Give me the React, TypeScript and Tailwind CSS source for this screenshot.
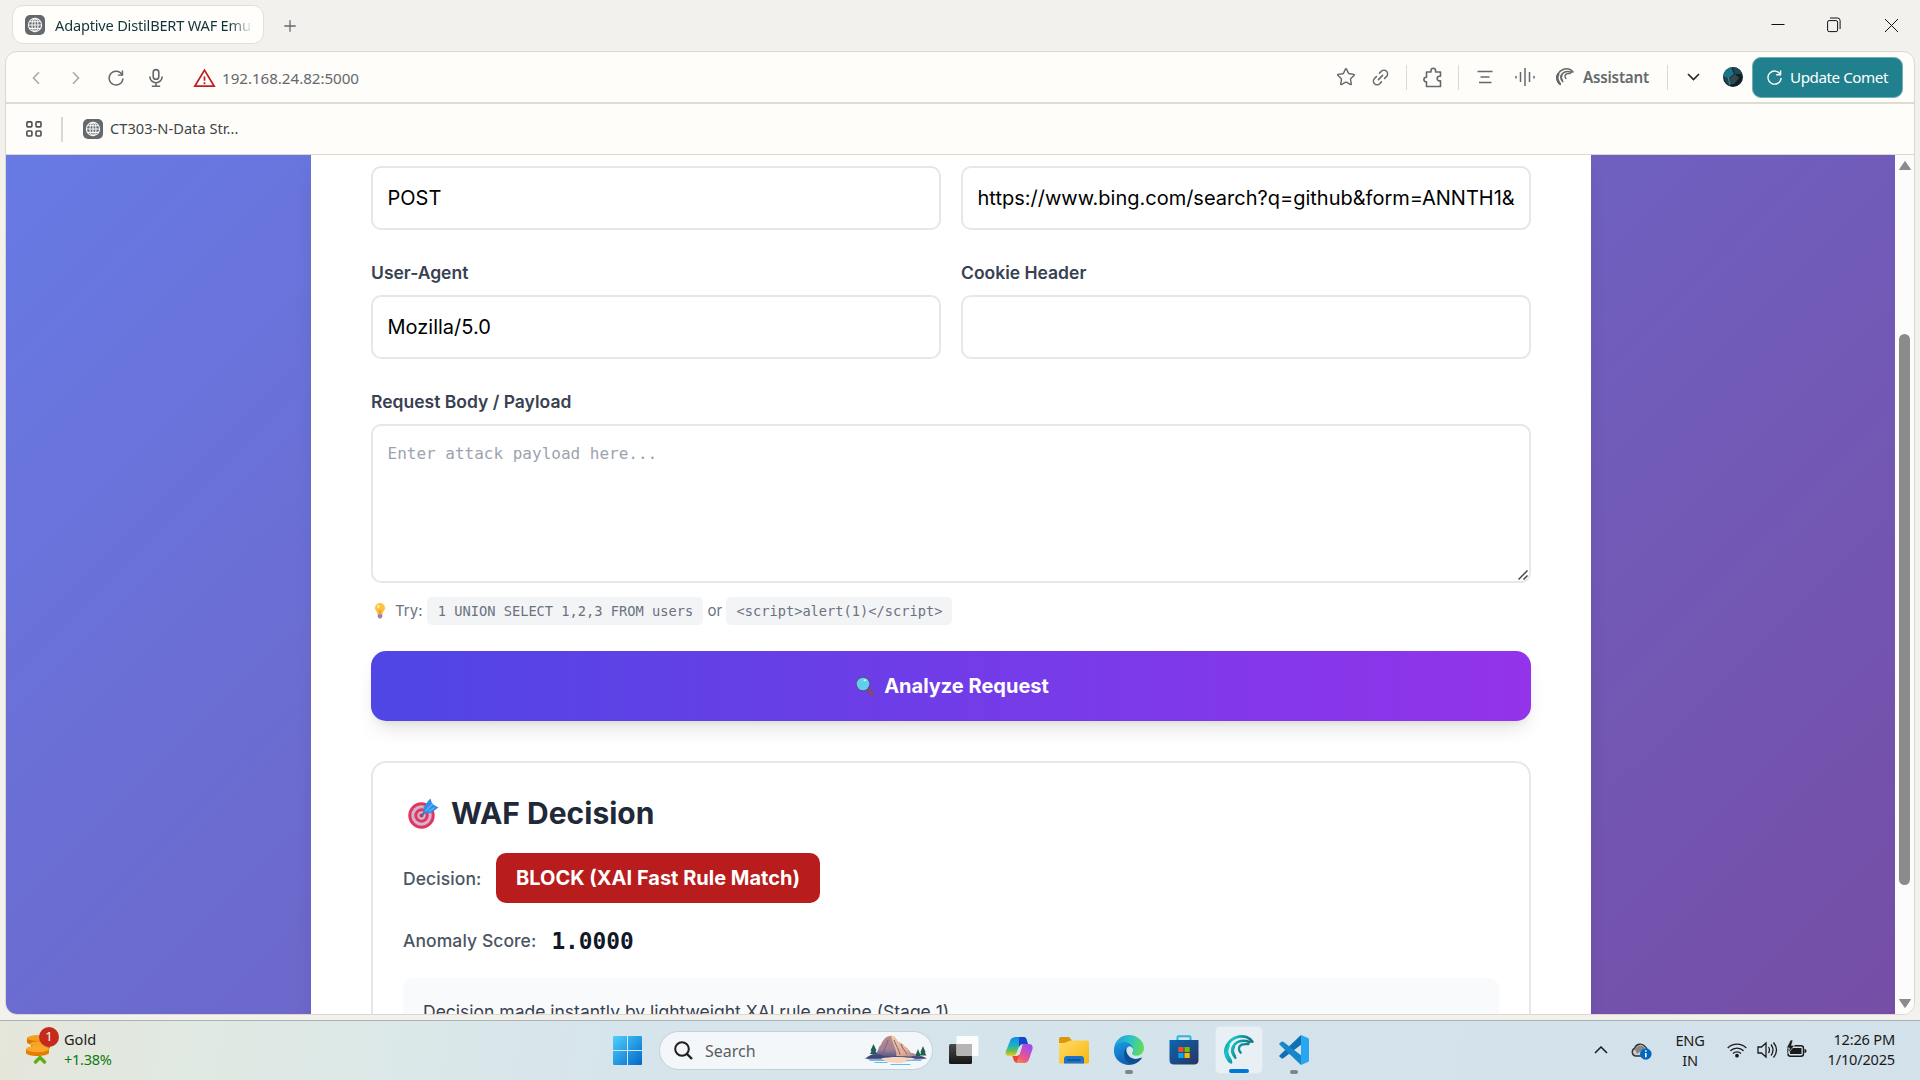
import React from "react";
import { Star, Plus } from "lucide-react";

const ui = "font-['Noto_Sans',sans-serif]";

function Globe() {
  return (
    <span className="flex h-5 w-5 shrink-0 items-center justify-center rounded-[5px] bg-[#64696d]">
      <svg width="16" height="16" viewBox="0 0 16 16" fill="none" stroke="#f7f7f5" strokeWidth="1.15">
        <circle cx="8" cy="8" r="6.6" />
        <ellipse cx="8" cy="8" rx="3" ry="6.6" />
        <path d="M8 1.4v13.2M1.4 8h13.2M2.4 4.7h11.2M2.4 11.3h11.2" />
      </svg>
    </span>
  );
}

function Reload({ color, size }: { color: string; size: number }) {
  return (
    <svg width={size} height={size} viewBox="0 0 20 20" fill="none" stroke={color} strokeWidth="1.6" strokeLinecap="round" strokeLinejoin="round">
      <path d="M16.9 6.6A7.7 7.7 0 1 0 17.7 11" />
      <path d="M17.2 2.2v4.6h-4.6" />
    </svg>
  );
}

function PuzzlePiece() {
  return (
    <svg width="20" height="21" viewBox="0 0 20 21" fill="none" stroke="currentColor" strokeWidth="1.6" strokeLinejoin="round">
      <path d="M3.5 5H8V3.600a2.300 2.300 0 0 1 4.600 0V5h4.900v4.300h-1a2.300 2.300 0 0 0 0 4.600h1V19.500H3.500V14.800H3.200a2.300 2.300 0 0 1 0-4.600h.3Z" />
    </svg>
  );
}

function CometMark({ size, color }: { size: number; color: string }) {
  return (
    <svg width={size} height={size} viewBox="0 0 90 90">
      <defs>
        <linearGradient id="cometg" gradientUnits="userSpaceOnUse" x1="0" y1="10" x2="90" y2="50">
          <stop offset="0" stopColor="#0d8f96" />
          <stop offset=".25" stopColor="#19c5ca" />
          <stop offset=".55" stopColor="#0f8f98" />
          <stop offset="1" stopColor="#1a626f" />
        </linearGradient>
      </defs>
      <g fill="none" stroke={color} strokeLinecap="round">
        <path d="M21 82C6 68 1 47 11 28 22 9 46 0 67 6c8 3 14 8 18 14" strokeWidth="8" />
        <path d="M17 76C4 60 5 44 11 32" strokeWidth="13" />
        <path d="M34 68C21 52 23 38 32 28 43 17 60 15 77 21" strokeWidth="7.5" />
        <path d="M31 62C25 52 25 42 29 35" strokeWidth="9" />
        <path d="M50 53C42 44 43 34 53 29 60 26 67 28 73 27" strokeWidth="7" />
      </g>
    </svg>
  );
}

function TabStrip() {
  return (
    <div className="flex h-[51px] items-start pl-3">
      <div className="mt-[5px] flex h-[39px] w-[252px] items-center rounded-[11px] border border-[#e2e0d6] bg-[#fffefb] pl-3 pr-2.5">
        <Globe />
        <div className={"ml-2.5 w-[199px] overflow-hidden whitespace-nowrap text-[14.6px] tracking-[-0.2px] leading-5 text-[#13343b] [mask-image:linear-gradient(90deg,#000_88%,transparent)] " + ui}>
          Adaptive DistilBERT WAF Emulator
        </div>
      </div>
      <Plus className="ml-[17px] mt-[17px] text-[#64696d]" size={18} strokeWidth={1.7} />
      <div className="ml-auto mr-[21px] flex h-[50px] items-center text-[#111]">
        <svg width="14" height="14" viewBox="0 0 14 14" stroke="currentColor"><path d="M0.5 6.5h13" /></svg>
        <svg className="ml-[42px]" width="14" height="16" viewBox="0 0 14 16" fill="none" stroke="currentColor">
          <rect x=".6" y="3.6" width="10" height="11" rx="1.5" />
          <path d="M3 1h7.5a2.6 2.6 0 0 1 2.6 2.6V12" />
        </svg>
        <svg className="ml-[42px]" width="16" height="16" viewBox="0 0 16 16" fill="none" stroke="currentColor"><path d="M2 2l13 13M15 2L2 15" /></svg>
      </div>
    </div>
  );
}

function AddressBar() {
  return (
    <div className="flex h-[52px] items-center border-b-2 border-[#dfddd1] pt-px text-[#64696d]">
      <svg className="ml-[26px]" width="8" height="14" viewBox="0 0 8 14" fill="none" stroke="#a9aba8" strokeWidth="1.6"><path d="M7 1.2L1.5 7 7 12.8" /></svg>
      <svg className="ml-[32px]" width="8" height="14" viewBox="0 0 8 14" fill="none" stroke="#a9aba8" strokeWidth="1.6"><path d="M1 1.2L6.5 7 1 12.8" /></svg>
      <span className="ml-[27px]"><Reload color="#64696d" size={18} /></span>
      <svg className="ml-[23px]" width="16" height="20" viewBox="0 0 16 20" fill="none" stroke="currentColor" strokeWidth="1.6">
        <rect x="5.2" y="1.6" width="5.6" height="9.6" rx="2.8" />
        <path d="M1.8 8.5a6.2 6.2 0 0 0 12.4 0M8 14.8v3M3.8 18.2h8.4" />
      </svg>
      <svg className="ml-[29px]" width="23" height="20" viewBox="0 0 23 20" fill="none" stroke="#c01f1f" strokeWidth="1.7">
        <path d="M11.5 2.1L21.2 18.2H1.8Z" />
        <path d="M11.5 8.5v4.2M11.5 14.3v1.9" />
      </svg>
      <span className={"ml-[6px] text-[15.2px] leading-5 tracking-[-0.05px] text-[#64696d] " + ui}>192.168.24.82:5000</span>

      <div className="-mt-px ml-auto flex items-center pr-[11px]">
        <Star size={20} strokeWidth={1.7} />
        <svg className="ml-[16px]" width="17" height="17" viewBox="0 0 17 17" fill="none" stroke="currentColor" strokeWidth="1.5" strokeLinecap="round">
          <path d="M7.5 4.1l1.8-1.8a3.6 3.6 0 0 1 5.2 5.2l-1.9 1.9" />
          <path d="M9.5 12.9l-1.8 1.8a3.6 3.6 0 0 1-5.2-5.2l1.9-1.9" />
          <path d="M6.4 10.6l4.2-4.2" />
        </svg>
        <i className="ml-[17px] h-[25px] w-px bg-[#dcdad0]" />
        <span className="ml-[16px]"><PuzzlePiece /></span>
        <i className="ml-[15px] h-[25px] w-px bg-[#dcdad0]" />
        <svg className="ml-[18px]" width="16" height="14" viewBox="0 0 16 14" stroke="currentColor" strokeWidth="1.5"><path d="M.5 1.5h15M3.5 7h9M2 12.5h12.5" /></svg>
        <svg className="ml-[22px]" width="20" height="18" viewBox="0 0 20 18" stroke="currentColor" strokeWidth="1.5"><path d="M1 8v2.500M5.500 4v10M10 0v18M14.500 4v10M19 8v2.500" /></svg>
        <span className="ml-[21px]"><CometMark size={18} color="#64696d" /></span>
        <span className={"ml-[9px] text-[15.2px] font-semibold leading-5 tracking-[-0.2px] " + ui}>Assistant</span>
        <i className="ml-[18px] h-[25px] w-px bg-[#dcdad0]" />
        <svg className="ml-[19px]" width="13" height="8" viewBox="0 0 13 8" fill="none" stroke="#222b2c" strokeWidth="1.7"><path d="M1 1l5.5 5.5L12 1" /></svg>
        <span className="ml-[23px] flex h-5 w-5 overflow-hidden rounded-full">
          <svg width="20" height="20" viewBox="0 0 20 20">
            <rect width="20" height="20" fill="#0f2228" />
            <path d="M0 3L8 0l3 7-5 4-6-1Z" fill="#1c7486" />
            <path d="M9 0h8l2 7-7 0Z" fill="#1f4a52" />
            <path d="M6 12l6-5 4 4-5 6H7Z" fill="#34484d" />
            <path d="M0 9l5 2 2 8-4-3Z" fill="#1b4750" />
            <path d="M5 10l2 8" stroke="#2f9fb0" strokeWidth="1" />
          </svg>
        </span>
        <button className={"ml-[9px] flex h-[41px] w-[151px] items-center rounded-[9px] border border-[#6db0b6] bg-[#21808d] pl-[13px] text-[15.2px] leading-5 text-white " + ui}>
          <Reload color="#fff" size={17} />
          <span className="ml-[7px] whitespace-nowrap tracking-[-0.45px]">Update Comet</span>
        </button>
      </div>
    </div>
  );
}

function Bookmarks() {
  return (
    <div className="flex h-[51px] items-center border-b border-[#dcd9cc]">
      <svg className="ml-[20px]" width="16" height="16" viewBox="0 0 16 16" fill="none" stroke="#4c5052" strokeWidth="1.6">
        <rect x=".9" y=".9" width="5" height="5" rx="1" /><rect x="10" y=".9" width="5" height="5" rx="1" />
        <rect x=".9" y="10" width="5" height="5" rx="1" /><rect x="10" y="10" width="5" height="5" rx="1" />
      </svg>
      <i className="ml-[19px] mr-[20px] h-[25px] w-[2px] bg-[#dad8cc]" />
      <Globe />
      <span className={"-mt-[3px] ml-[7px] text-[14.6px] leading-5 tracking-[0.04px] text-[#3f4546] " + ui}>CT303-N-Data Str...</span>
    </div>
  );
}

function Field({ label, value }: { label?: string; value: string }) {
  return (
    <div>
      {label && <div className="mb-2.5 text-[17.5px] font-semibold leading-[25px] text-[#374151]">{label}</div>}
      <div className="flex h-16 items-center overflow-hidden rounded-[10px] border-2 border-gray-200 px-[14.500px] text-[20px] text-black">
        <span className="w-full whitespace-nowrap">{value}</span>
      </div>
    </div>
  );
}

const mono = "font-['DejaVu_Sans_Mono',monospace]";

function Bulb() {
  return (
    <svg width="12" height="16" viewBox="0 0 12 16">
      <path d="M6 0a5 5 0 0 1 5 5c0 2.6-2.2 3.6-2.6 6.2H3.6C3.2 8.6 1 7.600 1 5a5 5 0 0 1 5-5Z" fill="#fcc43e" />
      <ellipse cx="4.300" cy="3.600" rx="1.300" ry="1.900" fill="#ffe79a" />
      <path d="M5 7l1 4.200 1-4.200" fill="none" stroke="#f08a24" strokeWidth=".8" />
      <path d="M3.700 11.300h4.600v2.500L7 15.500H5l-1.300-1.700Z" fill="#9b7fae" />
    </svg>
  );
}

function Magnifier() {
  return (
    <svg width="20" height="21" viewBox="0 0 20 21">
      <path d="M12.500 13l5 5.200" stroke="#7c4a78" strokeWidth="4" strokeLinecap="round" />
      <circle cx="8" cy="8" r="7.300" fill="#5f4a86" />
      <circle cx="8" cy="8" r="6.300" fill="#63cdec" />
      <ellipse cx="10" cy="4.200" rx="1.600" ry="1" fill="#c9f1fb" />
    </svg>
  );
}

function Target() {
  return (
    <svg width="31" height="31" viewBox="0 0 31 31">
      <circle cx="13.500" cy="17.500" r="13.200" fill="#e0365f" />
      <circle cx="13.500" cy="17.500" r="10.200" fill="#d3b4cf" />
      <circle cx="13.500" cy="17.500" r="7.200" fill="#e0365f" />
      <circle cx="13.500" cy="17.500" r="4.200" fill="#d3b4cf" />
      <circle cx="13.500" cy="17.500" r="2" fill="#b0406a" />
      <path d="M14 17l7-7" stroke="#4c6a92" strokeWidth="1.800" />
      <path d="M15.500 9.500L20.500 2.500 22.500.500 24 5.500 26 7 30.500 9.500 27 12 21.500 15.500 16 15Z" fill="#2f8fe8" />
      <path d="M17.500 13L25 5.500M20.500 13.500l6-4" stroke="#62b6fb" strokeWidth="1.100" />
    </svg>
  );
}

function PageView() {
  return (
    <div className="flex h-[859px] overflow-hidden rounded-b-[11px]">
      <div className="w-[1889px] overflow-hidden bg-[linear-gradient(135deg,#667eea_0%,#764ba2_100%)] bg-[length:1889px_1280px] bg-[position:0_-250px]">
        <main className="ml-[305px] h-[1100px] w-[1280px] bg-white px-[60px] pt-[11px] font-['Inter',sans-serif] shadow-[0_12px_19px_-4px_rgba(0,0,0,0.1)]">
          <div className="grid grid-cols-2 gap-5">
            <Field value="POST" />
            <Field value="https://www.bing.com/search?q=github&form=ANNTH1&" />
          </div>
          <div className="mt-[30px] grid grid-cols-2 gap-5">
            <Field label="User-Agent" value="Mozilla/5.0" />
            <Field label="Cookie Header" value="" />
          </div>
          <div className="mt-[30px] text-[17.5px] font-semibold leading-[25px] text-[#374151]">Request Body / Payload</div>
          <div className={"relative mt-2.5 h-[159px] rounded-[10px] border-2 border-gray-200 px-[14.500px] pt-[15px] text-[16px] leading-[25px] text-[#9ca3af] " + mono}>
            Enter attack payload here...
            <svg className="absolute bottom-px right-px" width="10" height="10" viewBox="0 0 10 10" stroke="#444" strokeWidth="1.500"><path d="M.5 9.500l9-9M5.500 9.500l4-4" /></svg>
          </div>
          <div className="mt-[14px] flex h-[28px] items-center text-[15px] text-[#6b7280]">
            <span className="ml-[3px]"><Bulb /></span>
            <span className="ml-[9px]">Try:</span>
            <code className={"ml-[5px] flex h-7 w-[276px] items-center justify-center rounded-[5px] bg-gray-100 text-[13.700px] " + mono}>1 UNION SELECT 1,2,3 FROM users</code>
            <span className="ml-[4px] w-[19px]">or</span>
            <code className={"flex h-7 w-[226px] items-center justify-center rounded-[5px] bg-gray-100 text-[13.700px] " + mono}>{"<script>alert(1)</script>"}</code>
          </div>
          <button className="mt-[26px] flex h-[70px] w-full items-center justify-center gap-[9px] rounded-[15px] bg-[linear-gradient(90deg,#4f46e5,#9333ea)] pl-[2px] text-[20px] font-bold text-white shadow-[0_12px_19px_-4px_rgba(0,0,0,0.1),0_5px_8px_-5px_rgba(0,0,0,0.1)]">
            <Magnifier />
            Analyze Request
          </button>
          <section className="mt-[40px] h-[400px] rounded-[15px] border-2 border-gray-200 px-[30px] pt-[30px]">
            <h2 className="flex h-10 items-center text-[30px] font-bold text-[#1f2937]">
              <span className="ml-[5px] mr-[12px]"><Target /></span>WAF Decision
            </h2>
            <div className="mt-[20px] flex h-[50px] items-center">
              <span className="w-[93px] pt-0.5 text-[17.5px] font-medium tracking-[0.08px] text-[#4b5563]">Decision:</span>
              <span className="flex h-[50px] w-[324px] items-center justify-center whitespace-nowrap rounded-[10px] bg-[#b91c1c] text-[20px] font-bold text-white">BLOCK (XAI Fast Rule Match)</span>
            </div>
            <div className="mt-[20px] flex h-[35px] items-center pt-0.5">
              <span className="text-[17.5px] font-medium tracking-[0.08px] text-[#4b5563]">Anomaly Score:</span>
              <span className={"ml-[15px] text-[22.800px] font-bold text-[#111827] " + mono}>1.0000</span>
            </div>
            <div className="mt-[20px] h-[160px] rounded-[10px] bg-gray-50 px-5 pt-[21px] text-[17.5px] leading-[25px] text-[#374151]">
              Decision made instantly by lightweight XAI rule engine (Stage 1)
            </div>
          </section>
        </main>
      </div>
      <div className="flex w-[19px] flex-col items-center bg-[#fcfcfc]">
        <svg className="mt-[6px]" width="14" height="10" viewBox="0 0 14 10" fill="#8b8b8b"><path d="M7 .5L12.500 8.500H1.500Z" stroke="#8b8b8b" strokeLinejoin="round" /></svg>
        <div className="mt-[163px] h-[551px] w-[11px] rounded-full bg-[#8b8b8b]" />
        <svg className="mt-[113px]" width="14" height="10" viewBox="0 0 14 10" fill="#8b8b8b"><path d="M7 9.500L1.500 1.500H12.500Z" stroke="#8b8b8b" strokeLinejoin="round" /></svg>
      </div>
    </div>
  );
}

function GoldWidget() {
  return (
    <div className="flex items-start">
      <div className="relative ml-[25px] mt-[6px] h-[38px] w-[34px]">
        <svg width="34" height="38" viewBox="0 0 34 38">
          <path d="M2 11v4c0 4 18 4 22 1v-5Z" fill="#d97706" /><ellipse cx="13" cy="11" rx="11" ry="3" fill="#f59e1b" />
          <path d="M6 17v4c0 3 18 3 19 0v-4Z" fill="#d97706" /><ellipse cx="15" cy="17" rx="10" ry="2.800" fill="#f7a325" />
          <path d="M1 22v4c1 4 21 4 23 0v-4Z" fill="#e67c00" /><ellipse cx="12.500" cy="22" rx="11.500" ry="3.200" fill="#fba92c" />
          <path d="M10.500 35l4.500-4.500 4.500 4.500" fill="none" stroke="#62ad16" strokeWidth="3.500" strokeLinecap="round" />
        </svg>
        <span className={"absolute left-[14px] top-[0px] flex h-5 w-5 items-center justify-center rounded-full bg-[#c42b1c] text-[13px] text-white " + ui}>1</span>
      </div>
      <div className={"ml-[5px] mt-[8px] text-[14.600px] leading-[20px] " + ui}>
        <div className="text-[#1b1b1b]">Gold</div>
        <div className="tracking-[-0.3px] text-[#0f7b0f]">+1.38%</div>
      </div>
    </div>
  );
}

function Mountain() {
  return (
    <svg width="62" height="32" viewBox="0 0 62 32">
      <defs>
        <linearGradient id="mtl" x1="0" y1="0" x2="0" y2="1"><stop offset="0" stopColor="#b98b86" /><stop offset=".6" stopColor="#a58195" /><stop offset="1" stopColor="#4a4f86" /></linearGradient>
        <linearGradient id="mtr" x1="0" y1="0" x2="1" y2="1"><stop offset="0" stopColor="#f3cba8" /><stop offset=".6" stopColor="#e3ad93" /><stop offset="1" stopColor="#7d6c97" /></linearGradient>
      </defs>
      <path d="M2 24c2-3 6-4 9-5 3-2 2-7 5-8 1-4 5-9 9-9 4-1 6 3 8 6 3 1 5 2 7 5 3 1 4 4 6 6 5 1 11 3 15 5H2Z" fill="url(#mtl)" />
      <path d="M26 1.500c4 0 5 4 7 6.500 3 1 5 2 7 5 3 1 4 4 6 6 4 1 8 2 11 4H31c2-6-3-11-5-21.500Z" fill="url(#mtr)" />
      <path d="M23 6c-1 5-4 8-5 15M29 6c2 6 5 9 6 15M36 10c1 4 4 7 6 10" stroke="#7a6285" strokeWidth="1" fill="none" />
      <path d="M0 24.500c4-3 10-5 15-4 5 2 9 2 13 2 6-1 12 0 18 0 6-1 12 0 16 2-8 1.500-16 1-24 1H10c-4 0-7 0-10-1Z" fill="#38457b" opacity=".85" />
      <path d="M16 24.500c8-2 24-2 34 0-4 2-8 4-16 4.500-8 0-14-1-18-4.500Z" fill="#f6d6be" />
      <path d="M5 26.500h14M42 26.500h14M10 28.500h12M26 30.500h19" stroke="#66bce8" strokeWidth="1.200" strokeLinecap="round" />
      <path d="M8.500 10l3 6.500-1 .5 1.500 3H5l1.500-3-1-.5ZM53 15l2 5v2h-4v-2ZM58 12l2.500 6-.5 1 1.500 2.500h-7L56 19l-.5-1Z" fill="#1f6055" />
    </svg>
  );
}

function TaskIcons() {
  return (
    <>
      <svg className="ml-[16px]" width="30" height="30" viewBox="0 0 30 30">
        <defs><linearGradient id="tv" x1="0" y1="0" x2="0" y2="1"><stop offset="0" stopColor="#4a4a4a" /><stop offset="1" stopColor="#161616" /></linearGradient></defs>
        <rect x="0" y="9" width="23" height="20" rx="1.500" fill="url(#tv)" />
        <rect x="7.500" y="1" width="22" height="20" rx="1.500" fill="#fff" opacity=".9" />
        <path d="M7.500 9H23v12H9q-1.500 0-1.500-1.500Z" fill="#b5b5b5" />
      </svg>
      <svg className="ml-[26px]" width="28" height="28" viewBox="0 0 28 28">
        <defs>
          <linearGradient id="cp1" x1="0" y1="0" x2="0" y2="1"><stop offset="0" stopColor="#1788e8" /><stop offset=".45" stopColor="#1bb3c4" /><stop offset=".75" stopColor="#6cc24a" /><stop offset="1" stopColor="#f7c82d" /></linearGradient>
          <linearGradient id="cp2" x1="0" y1="1" x2=".6" y2="0"><stop offset="0" stopColor="#f7a03a" /><stop offset=".4" stopColor="#f0587f" /><stop offset="1" stopColor="#a24bf0" /></linearGradient>
        </defs>
        <path d="M12 1h6c3 0 3.500 2 4 4l1 3h-5c-3 0-4 2-5 5l-2 5c-1 2-2 2-4 2H4c-3 0-4-2-3-5L5 5c1-3 3-4 7-4Z" fill="url(#cp1)" />
        <path d="M14 1h4c3 0 3.500 2 4 4l1 3h-5c-2 0-3 1-4 3Z" fill="#1746c9" />
        <path d="M18 8h6c3 0 4 2 3.500 5l-3 9c-1 3-2 5-6 5h-5c-3 0-4-2-5-4l-1-3h4c2 0 3-1 4-4l1.500-5c.3-1.500.5-3 1-3Z" fill="url(#cp2)" />
        <path d="M7.500 20h4c1 0 2-.5 2.500-1l-2 6c-.5 1.500 0 2 1 2-3 0-4-2-4.500-4Z" fill="#e8472e" />
      </svg>
      <svg className="ml-[26px]" width="30" height="28" viewBox="0 0 30 28">
        <defs><linearGradient id="fd" x1="0" y1="0" x2="1" y2="1"><stop offset="0" stopColor="#ffdc68" /><stop offset="1" stopColor="#f9b50d" /></linearGradient></defs>
        <path d="M0 3q0-2 2-2h8l3 3.500V9H0Z" fill="#dc9709" />
        <path d="M0 7q7 0 9-1.500 1.500-1 3-1h16.500q1.500 0 1.500 1.500v20q0 1.500-1.500 1.500h-27Q0 27.500 0 26Z" fill="url(#fd)" />
        <path d="M5 27.500V23q0-3 3-3h14q3 0 3 3v4.500Z" fill="#1c72c9" /><path d="M9 24h12" stroke="#0d4f95" strokeWidth="1.500" strokeLinecap="round" />
      </svg>
      <div className="relative ml-[25px]">
        <svg width="30" height="30" viewBox="0 0 30 30">
          <defs>
            <linearGradient id="eg1" x1="0" y1=".3" x2="1" y2=".5"><stop offset="0" stopColor="#1b9de0" /><stop offset=".5" stopColor="#2dc3c7" /><stop offset="1" stopColor="#62dc55" /></linearGradient>
            <linearGradient id="eg2" x1="0" y1="0" x2=".5" y2="1"><stop offset="0" stopColor="#1a9de6" /><stop offset="1" stopColor="#1259ab" /></linearGradient>
          </defs>
          <path d="M0 15C0 6 7 0 15 0s15 6 15 13c0 5-4 8-9 8-3 0-4-1-3-3 3-4-1-8-6-8C6 10 0 11 0 15Z" fill="url(#eg1)" />
          <path d="M0 14C1 10 5 7 10 7c6 0 9 4 9 7 0-2-3-4-5-2-4 3-1 12 7 12 3 0 5-.5 7-1.500C26 27 20 30 15 30 7 30-1 24 0 14Z" fill="url(#eg2)" />
          <path d="M12 13c-4 5-2 15 7 16 4-1 7-3.500 9-6.500-9 4-16-1-16-9.500Z" fill="#0e4e93" />
          <path d="M15 14c1-2 4-1 4 1.500-.5 1.500-2 2.500-.5 4 1 1.200 4 1.500 5 1.200-5 2-10-2-8.500-6.700Z" fill="#d6e4ec" />
        </svg>
        <i className="absolute -bottom-[9px] left-[11px] h-1 w-2 rounded-full bg-[#7d858b]" />
      </div>
      <svg className="ml-[25px]" width="30" height="30" viewBox="0 0 30 30">
        <defs><linearGradient id="st" x1="0" y1="0" x2="1" y2="1"><stop offset="0" stopColor="#0b66b4" /><stop offset="1" stopColor="#28345f" /></linearGradient></defs>
        <path d="M8.500 7V2.500q0-1.300 1.300-1.300h10.400q1.300 0 1.300 1.300V7" fill="none" stroke="#24b6e6" strokeWidth="2" />
        <path d="M.5 5h29v20q0 4.500-4.500 4.500H5Q.5 29.500.5 25Z" fill="url(#st)" />
        <rect x="9.300" y="12" width="5.200" height="5" fill="#f25022" /><rect x="15.500" y="12" width="5.200" height="5" fill="#7fba00" />
        <rect x="9.300" y="18" width="5.200" height="5" fill="#00a4ef" /><rect x="15.500" y="18" width="5.200" height="5" fill="#ffb900" />
      </svg>
      <div className="relative ml-[16px] flex h-12 w-12 items-center justify-center rounded-[5px] border border-[#dfe7ec] bg-[#e9f0f5]">
        <CometMark size={30} color="url(#cometg)" />
        <i className="absolute bottom-0 left-[13px] h-1 w-5 rounded-full bg-[#0078d4]" />
      </div>
      <div className="relative ml-[16px]">
        <svg width="30" height="30" viewBox="0 0 30 30">
          <path d="M22 0L2.500 18.500 0 21l2 2q1 1 2.300.2L23 9Z" fill="#0f6fb3" />
          <path d="M22 30L2.500 11.500 0 9l2-2q1-1 2.300-.2L23 21Z" fill="#1687cc" />
          <path d="M22 0l7 3q1 .5 1 1.700v20.600q0 1.200-1 1.700l-7 3Z" fill="#29a6f0" />
        </svg>
        <i className="absolute -bottom-[9px] left-[11px] h-1 w-2 rounded-full bg-[#7d858b]" />
      </div>
    </>
  );
}

function Tray() {
  return (
    <div className="ml-auto flex h-[58px] items-center text-[#1a1a1a]">
      <svg width="14" height="8" viewBox="0 0 14 8" fill="none" stroke="currentColor" strokeWidth="1.500"><path d="M1 7l6-6 6 6" /></svg>
      <svg className="ml-[23px] mt-[2px]" width="21" height="18" viewBox="0 0 21 18">
        <path d="M4.500 14A4 4 0 0 1 3.500 6.500 6 6 0 0 1 14 4.500a4 4 0 0 1 2 3L12 14Z" fill="#cfcfcf" stroke="#333" strokeWidth="1.400" />
        <path d="M4 7.500C6 3 11 2 14 6l-8 6Z" fill="#888" />
        <circle cx="14.800" cy="12" r="5.800" fill="#0067c0" /><path d="M14.800 8.300v1.500M14.800 11v4.300" stroke="#fff" strokeWidth="1.600" />
      </svg>
      <div className={"ml-[22px] w-[32px] text-center text-[14.600px] leading-[20px] tracking-[-0.2px] " + ui}>ENG<br />IN</div>
      <svg className="ml-[21px]" width="20" height="16" viewBox="0 0 20 16" fill="none" stroke="currentColor" strokeWidth="1.300">
        <path d="M.7 6a13 13 0 0 1 18.600 0M3.400 8.800a9.300 9.300 0 0 1 13.200 0M6 11.500a5.600 5.600 0 0 1 8 0" /><circle cx="10" cy="13.700" r="1.200" fill="currentColor" />
      </svg>
      <svg className="ml-[10px]" width="21" height="18" viewBox="0 0 21 18" fill="none" stroke="currentColor" strokeWidth="1.300">
        <path d="M1 6h3.500L9 2v14l-4.500-4H1Z" /><path d="M11.500 6q2 3 0 6M14 3.500q4 5.500 0 11M16.500 1.500q6 7.500 0 15" />
      </svg>
      <svg className="-mt-[2px] ml-[8px]" width="21" height="18" viewBox="0 0 21 18">
        <rect x="2" y="5.700" width="15.500" height="10.600" rx="2.500" fill="none" stroke="currentColor" strokeWidth="1.400" />
        <path d="M4 8h11.500v6H4Z" fill="currentColor" /><path d="M18.500 9q2 0 2 2t-2 2Z" fill="currentColor" />
        <path d="M4.500 0L.5 8h3L2 13.500 8.500 5.500h-3L7 0Z" fill="currentColor" stroke="#d5e2ea" strokeWidth=".7" />
      </svg>
      <div className={"-mt-0.5 mr-[25px] w-[88px] whitespace-nowrap text-right text-[14.600px] leading-[20px] tracking-[-0.2px] " + ui}>12:26 PM<br />1/10/2025</div>
    </div>
  );
}

function Taskbar() {
  return (
    <div className="relative flex h-[60px] border-t border-[#a9b2b5] bg-[linear-gradient(100deg,#e6e6da_0%,#e1e9e2_9%,#dce9e8_20%,#d6e4ec_32%,#d3e1ea_100%)]">
      <div className="w-[613px]"><GoldWidget /></div>
      <div className="flex h-[58px] items-center">
        <svg width="29" height="29" viewBox="0 0 29 29">
          <defs><linearGradient id="wn" x1="0" y1="0" x2="1" y2="1"><stop offset="0" stopColor="#4fd0ff" /><stop offset="1" stopColor="#0067c8" /></linearGradient></defs>
          <path d="M1 0h13v14H0V1q0-1 1-1ZM15 0h13q1 0 1 1v13H15ZM0 15h14v14H1q-1 0-1-1ZM15 15h14v13q0 1-1 1H15Z" fill="url(#wn)" />
        </svg>
        <div className="ml-[17px] flex h-[39px] w-[274px] items-center rounded-full border border-[#c4d0d8] bg-[#f3f7fa] pl-[14px]">
          <svg width="19" height="19" viewBox="0 0 19 19" fill="none" stroke="#1f1f1f" strokeWidth="2"><circle cx="8" cy="8" r="6.800" /><path d="M13 13l5 5" strokeWidth="2.400" /></svg>
          <span className={"ml-[12px] pt-px text-[16px] text-[#5a5d60] " + ui}>Search</span>
          <span className="ml-auto mr-[5px]"><Mountain /></span>
        </div>
        <TaskIcons />
      </div>
      <Tray />
    </div>
  );
}

export default function App() {
  return (
    <div className="flex h-[1080px] w-[1920px] flex-col overflow-hidden bg-[#f3f1ed]">
      <TabStrip />
      <div className="mx-[5px] h-[964px] rounded-[12px] border border-[#dcd9cc] bg-[#fefdf9]">
        <AddressBar />
        <Bookmarks />
        <PageView />
      </div>
      <div className="h-[5px]" />
      <Taskbar />
    </div>
  );
}
